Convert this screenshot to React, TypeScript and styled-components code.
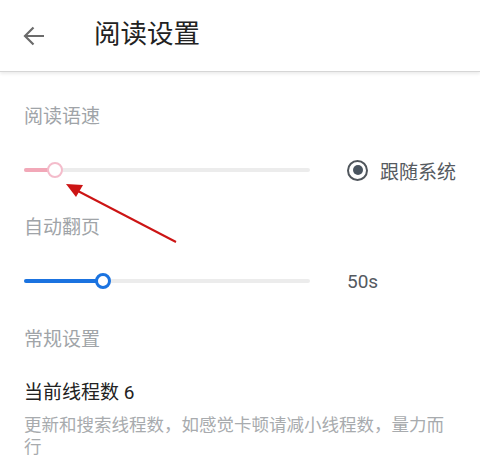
import React from 'react';
import styled, { createGlobalStyle } from 'styled-components';

const GlobalStyle = createGlobalStyle`
    html, body {
        margin: 0;
        padding: 0;
        background: #ffffff;
    }
    body {
        font-family: Roboto, "Noto Sans CJK SC", sans-serif;
    }
`;

const Page = styled.div`
    position: relative;
    width: 480px;
    height: 468px;
    overflow: hidden;
    background: #ffffff;
`;

const Header = styled.div`
    display: flex;
    align-items: center;
    height: 71px;
    border-bottom: 1px solid #d6d6d6;
    box-shadow: 0 2px 3px rgba(0, 0, 0, 0.08);
`;

const BackButton = styled.div`
    display: flex;
    align-items: center;
    justify-content: center;
    width: 22px;
    height: 20px;
    margin-left: 23px;
    margin-right: 49px;
`;

const Title = styled.div`
    font-size: 26.5px;
    color: #222222;
    line-height: 34px;
    margin-top: -4px;
`;

const Body = styled.div`
    padding: 32px 24px 0 24px;
`;

const SectionLabel = styled.div<{ $gap?: number }>`
    font-size: 19px;
    line-height: 26px;
    color: #a0a4a8;
    margin-top: ${(p) => p.$gap ?? 0}px;
`;

const SliderRow = styled.div`
    display: flex;
    align-items: center;
    height: 40px;
    margin-top: 20px;
`;

const Track = styled.div`
    position: relative;
    width: 286px;
    height: 4px;
    border-radius: 2px;
    background: #ececec;
    flex-shrink: 0;
`;

const Fill = styled.div<{ $color: string }>`
    position: absolute;
    left: 0;
    top: 0;
    height: 4px;
    border-radius: 2px;
    background: ${(p) => p.$color};
`;

const Thumb = styled.div<{ $color: string; $border: number }>`
    position: absolute;
    top: 50%;
    width: 16px;
    height: 16px;
    box-sizing: border-box;
    border-radius: 50%;
    background: #ffffff;
    border: ${(p) => p.$border}px solid ${(p) => p.$color};
    transform: translate(-50%, -50%);
`;

const SideItem = styled.div`
    display: flex;
    align-items: center;
    margin-left: 37px;
    font-size: 19px;
    color: #555a5f;
    white-space: nowrap;
`;

const Radio = styled.div`
    display: flex;
    align-items: center;
    justify-content: center;
    width: 21px;
    height: 21px;
    box-sizing: border-box;
    border-radius: 50%;
    border: 2.5px solid #50565c;
    margin-right: 12px;
`;

const RadioDot = styled.div`
    width: 10px;
    height: 10px;
    border-radius: 50%;
    background: #4a5560;
`;

const ItemTitle = styled.div`
    font-size: 19px;
    line-height: 26px;
    color: #222222;
    margin-top: 27px;
`;

const ItemDesc = styled.div`
    font-size: 17.5px;
    line-height: 22px;
    color: #a8abae;
    margin-top: 8px;
    width: 432px;
`;

const Annotation = styled.svg`
    position: absolute;
    left: 0;
    top: 0;
    pointer-events: none;
`;

interface ISliderProps {
    value: number;
    color: string;
    thumbColor: string;
    thumbBorder: number;
}

const Slider = ({ value, color, thumbColor, thumbBorder }: ISliderProps) => (
    <Track>
        <Fill $color={color} style={{ width: value }} />
        <Thumb $color={thumbColor} $border={thumbBorder} style={{ left: value }} />
    </Track>
);

const App = () => {
    return (
        <>
            <GlobalStyle />
            <Page>
                <Header>
                    <BackButton>
                        <svg width="22" height="20" viewBox="0 0 22 20">
                            <path
                                d="M21 10H2 M10.5 1.5L2 10l8.5 8.5"
                                fill="none"
                                stroke="#6b6b6b"
                                strokeWidth="2.2"
                            />
                        </svg>
                    </BackButton>
                    <Title>阅读设置</Title>
                </Header>
                <Body>
                    <SectionLabel>阅读语速</SectionLabel>
                    <SliderRow>
                        <Slider value={31} color="#f2a8b8" thumbColor="#f4bccb" thumbBorder={2} />
                        <SideItem>
                            <Radio>
                                <RadioDot />
                            </Radio>
                            跟随系统
                        </SideItem>
                    </SliderRow>
                    <SectionLabel $gap={25}>自动翻页</SectionLabel>
                    <SliderRow>
                        <Slider value={79} color="#1b73e0" thumbColor="#1b73e0" thumbBorder={3} />
                        <SideItem>50s</SideItem>
                    </SliderRow>
                    <SectionLabel $gap={26}>常规设置</SectionLabel>
                    <ItemTitle>当前线程数 6</ItemTitle>
                    <ItemDesc>更新和搜索线程数，如感觉卡顿请减小线程数，量力而行</ItemDesc>
                </Body>
                <Annotation width="480" height="468" viewBox="0 0 480 468">
                    <line x1="176" y1="242" x2="76" y2="190" stroke="#cc1414" strokeWidth="2" />
                    <polygon points="66,184 83,185 76,197" fill="#cc1414" />
                </Annotation>
            </Page>
        </>
    );
};

export default App;
